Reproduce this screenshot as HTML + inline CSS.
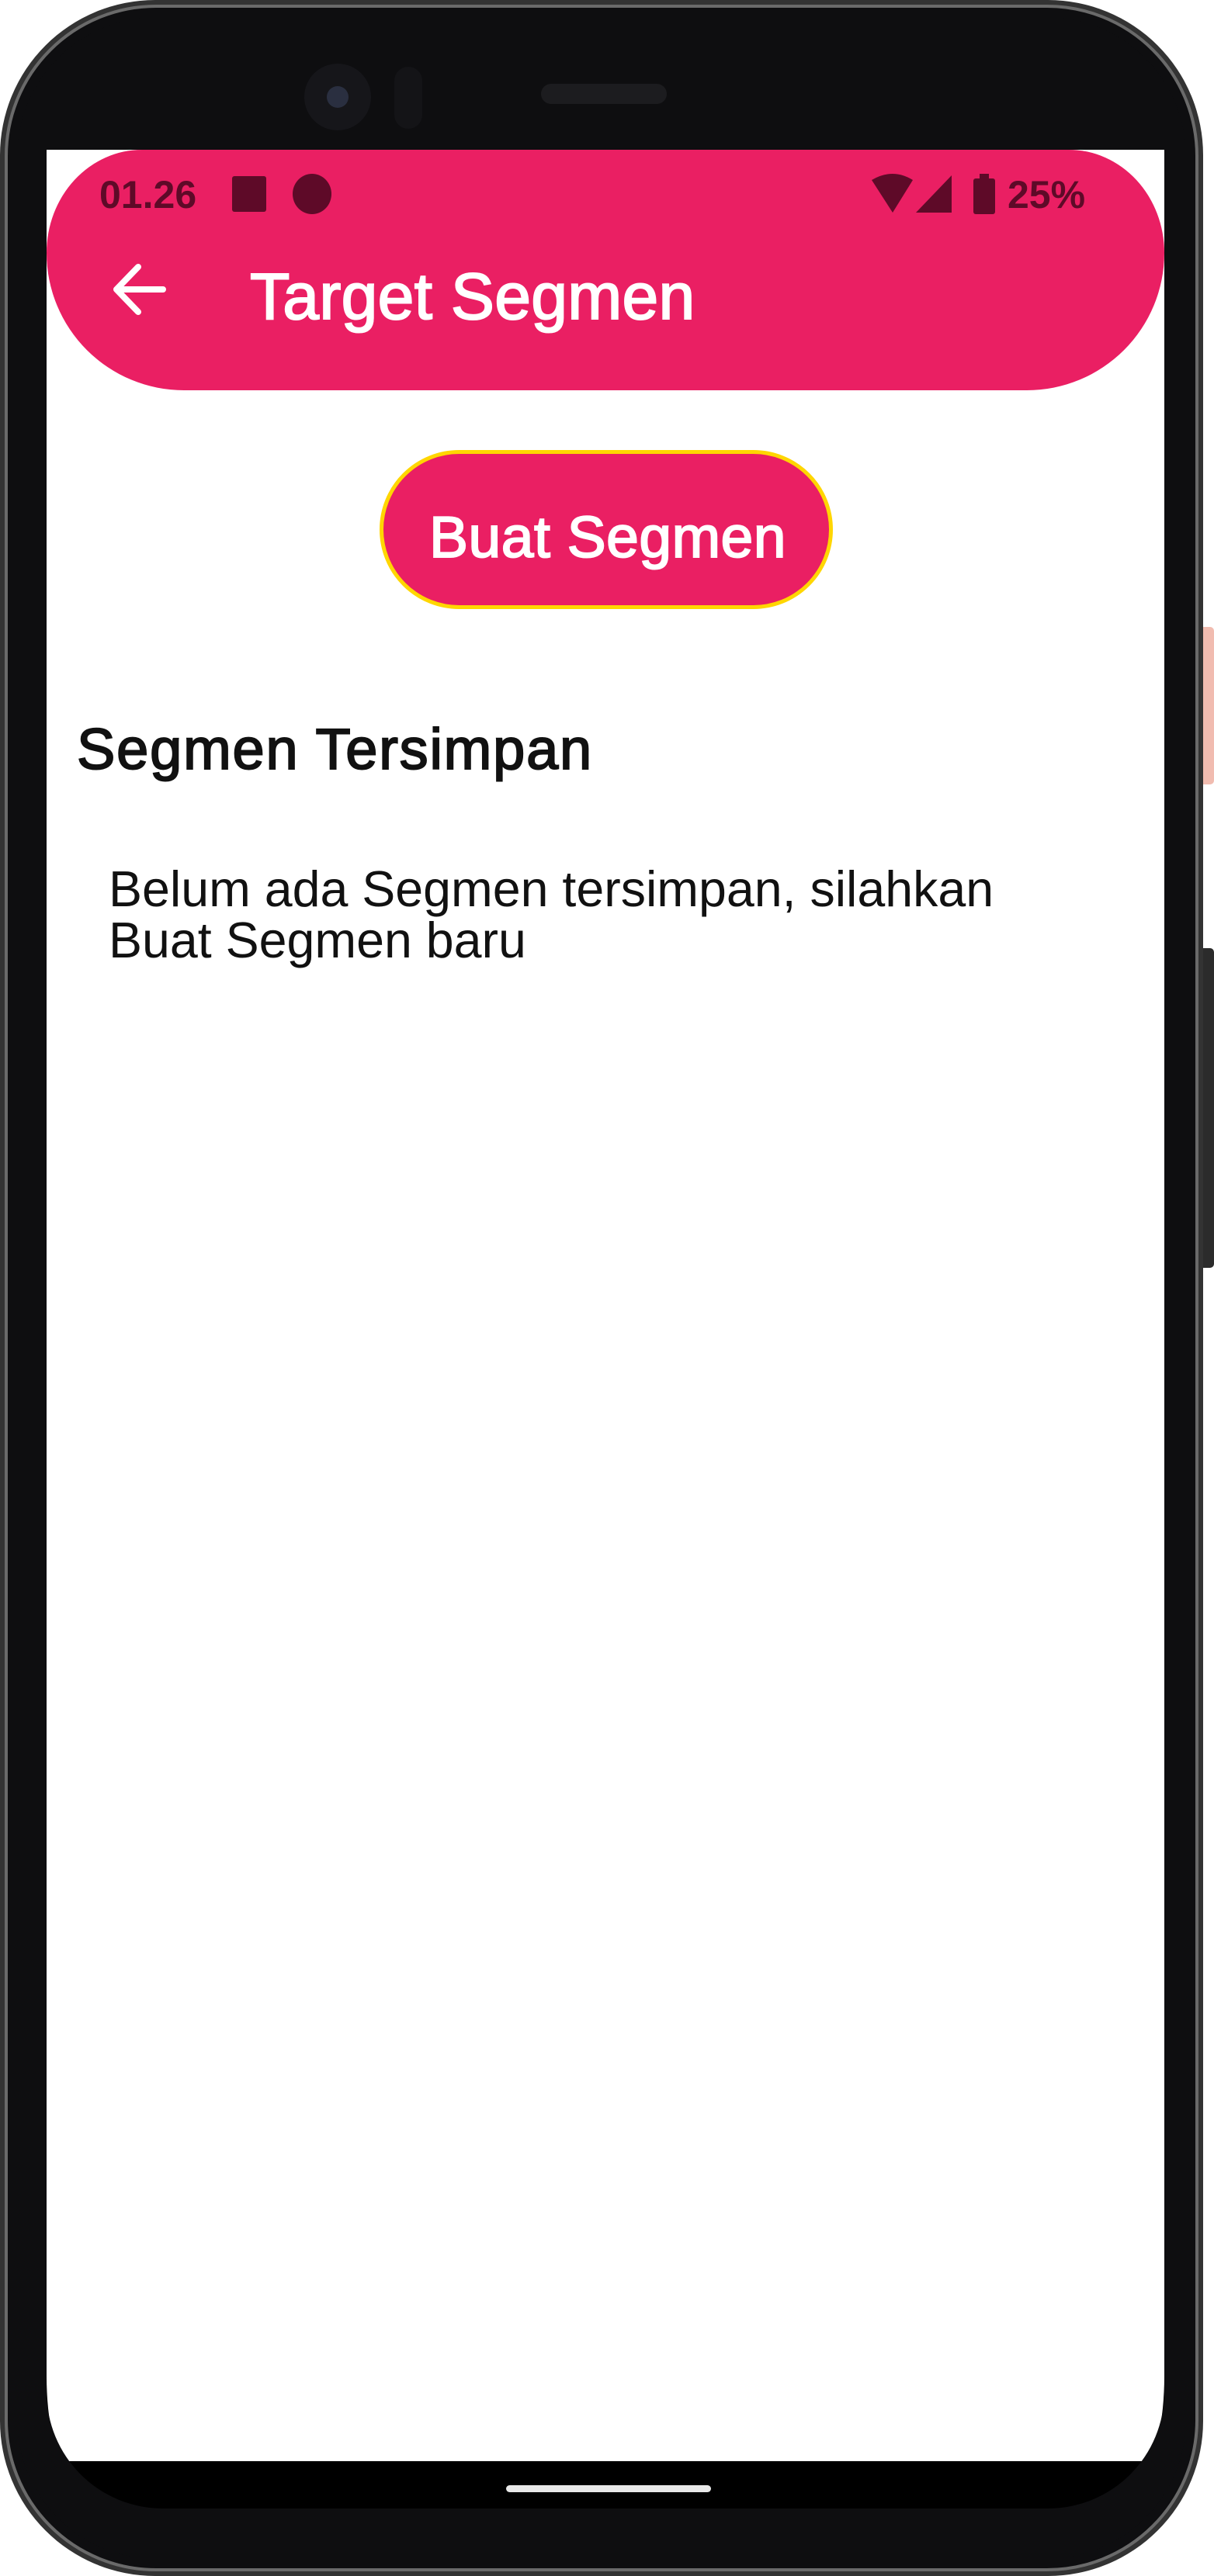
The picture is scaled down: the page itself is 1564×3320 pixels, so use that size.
<!DOCTYPE html>
<html><head><meta charset="utf-8"><style>
html,body{margin:0;padding:0;width:1564px;height:3320px;background:#fff;overflow:hidden;font-family:"Liberation Sans",sans-serif}
.phone{position:absolute;left:0;top:0;width:1550px;height:3320px;border-radius:200px;background:#333;}
.p2{position:absolute;left:6px;top:6px;right:6px;bottom:6px;border-radius:195px;background:#0e0e10;border:4px solid #6a6a6a;box-sizing:border-box}
.p3{position:absolute;left:22px;top:22px;right:22px;bottom:22px;border-radius:180px;background:#0e0e10;}
.btn1{position:absolute;left:1550px;top:808px;width:14px;height:203px;background:#f1bcb0;border-radius:0 5px 5px 0}
.btn2{position:absolute;left:1550px;top:1222px;width:14px;height:412px;background:#2b2b2b;border-radius:0 5px 5px 0}
.screen{position:absolute;left:60px;top:193px;width:1440px;height:3040px;background:#000;border-radius:0 0 150px 150px;overflow:hidden}
.white{position:absolute;left:0;top:0;width:1440px;height:2979px;background:#fff;border-radius:0 0 27px 27px/0 0 110px 110px}
.header{position:absolute;left:0;top:0;width:1440px;height:310px;background:#ea1f63;border-radius:125px 125px 180px 180px/135px 135px 180px 180px}
.pill{position:absolute;left:592px;top:3010px;width:264px;height:9px;background:#e8e8e8;border-radius:5px}
.t{position:absolute;white-space:nowrap}
</style></head><body>
<div class="phone"><div class="p2"></div><div class="p3"></div></div>
<div class="btn1"></div><div class="btn2"></div>
<div style="position:absolute;left:392px;top:82px;width:86px;height:86px;border-radius:50%;background:#16161a"></div>
<div style="position:absolute;left:421px;top:111px;width:28px;height:28px;border-radius:50%;background:#2a2f40"></div>
<div style="position:absolute;left:508px;top:86px;width:36px;height:80px;border-radius:18px;background:#141417"></div>
<div style="position:absolute;left:697px;top:108px;width:162px;height:26px;border-radius:13px;background:#1c1c1f"></div>
<div class="screen">
  <div class="white"></div>
  <div class="header"></div>
  <div class="pill"></div>
</div>
<div class="t" style="left:128px;top:222px;font-size:50px;font-weight:bold;color:#5e0a28">01.26</div>
<div style="position:absolute;left:299px;top:227px;width:44px;height:46px;background:#5e0a28;border-radius:3px"></div>
<div style="position:absolute;left:377px;top:224px;width:50px;height:52px;background:#5e0a28;border-radius:50%"></div>
<svg style="position:absolute;left:1120px;top:222px" width="170" height="56" viewBox="0 0 170 56">
<path d="M3 10 Q30 -6 56 10 L30 52 Z" fill="#5e0a28"/>
<path d="M60 52 L106 4 L106 52 Z" fill="#5e0a28"/>
<rect x="134" y="8" width="28" height="46" rx="3" fill="#5e0a28"/>
<rect x="142" y="2" width="12" height="8" fill="#5e0a28"/>
</svg>
<div class="t" style="left:1298px;top:222px;font-size:50px;font-weight:bold;color:#5e0a28">25%</div>
<svg style="position:absolute;left:144px;top:340px" width="70" height="66" viewBox="0 0 70 66">
<path d="M34 4 L6 33 L34 62 M6 33 L66 33" stroke="#fff" stroke-width="8" fill="none" stroke-linecap="round" stroke-linejoin="round"/>
</svg>
<div class="t" style="left:322px;top:334px;font-size:84px;color:#fff;letter-spacing:0.3px;-webkit-text-stroke:2px #fff">Target Segmen</div>
<div style="position:absolute;left:489px;top:580px;width:584px;height:205px;box-sizing:border-box;border:5px solid #ffd600;border-radius:103px;background:#ea1f63"></div>
<div class="t" style="left:553px;top:649px;font-size:75px;color:#fff;letter-spacing:0.5px;-webkit-text-stroke:2px #fff">Buat Segmen</div>
<div class="t" style="left:99px;top:923px;font-size:74px;color:#111;-webkit-text-stroke:2px #111;letter-spacing:1.8px">Segmen Tersimpan</div>
<div class="t" style="left:140px;top:1113px;font-size:64.5px;line-height:66px;color:#111">Belum ada Segmen tersimpan, silahkan<br>Buat Segmen baru</div>
</body></html>
